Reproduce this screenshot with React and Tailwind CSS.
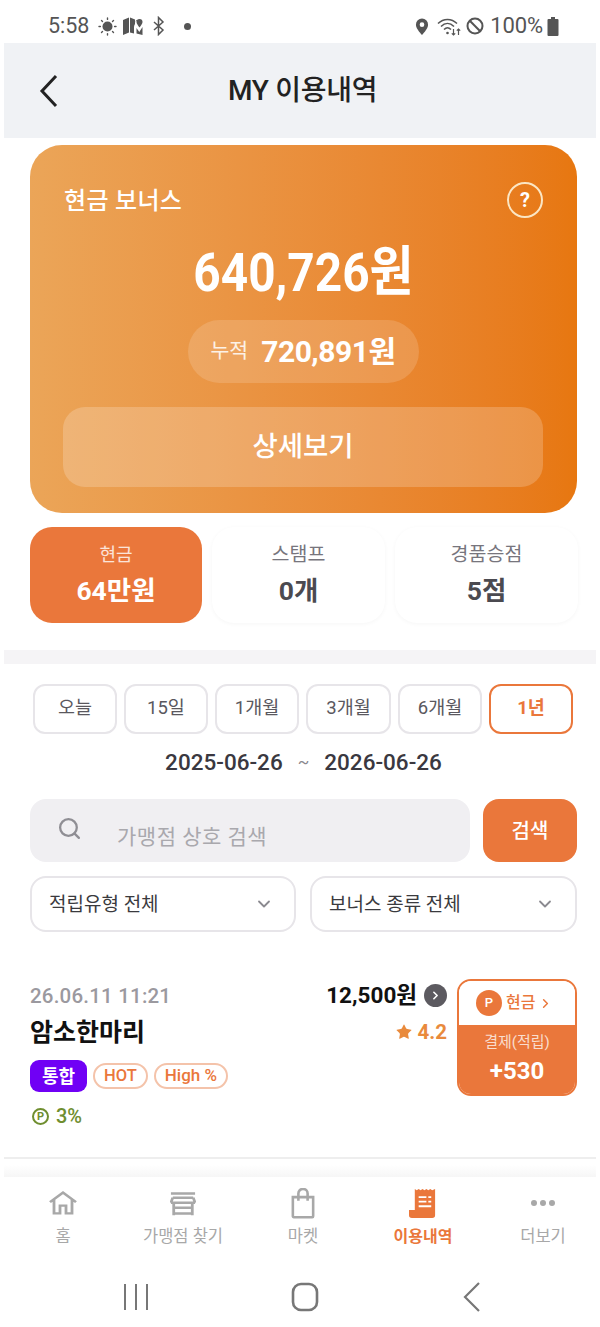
import React from "react";
import { ChevronDown, ChevronRight, Search, Star } from "lucide-react";

const FONT = { fontFamily: 'Roboto, "Noto Sans CJK KR", sans-serif' };

function StatusBar() {
  return (
    <div className="h-[43px] shrink-0 flex items-center justify-between pl-[48px] pr-[41px] pt-[9px] text-[#555]">
      <div className="flex items-center">
        <span className="text-[21.5px] leading-none">5:58</span>
        <svg className="ml-[9px]" width="19" height="19" viewBox="0 0 19 19" fill="#555">
          <circle cx="9.5" cy="9.5" r="5" />
          <g stroke="#555" strokeWidth="1.4" strokeLinecap="round">
            <path d="M9.5 1v1.4M9.5 16.6V18M1 9.5h1.4M16.6 9.5H18M3.5 3.5l1 1M14.5 14.5l1 1M3.5 15.5l1-1M14.5 4.5l1-1" />
          </g>
        </svg>
        <svg className="ml-[5px]" width="22" height="20" viewBox="0 0 22 20" fill="#555">
          <path d="M1 4l6-2.5v15L1 19zM8 1.5l5 2V8c-.6 1-1 2-1 3v6.5l-4-1zM14 4l1 .3c-1 1-1.5 2-1.5 3zM20.5 11v8l-6-1.5V12l2.8 4z" />
          <path d="M17.5 3a3 3 0 0 1 3 3c0 2-3 5.5-3 5.5s-3-3.500-3-5.500a3 3 0 0 1 3-3z" />
        </svg>
        <svg className="ml-[8px]" width="14" height="20" viewBox="0 0 14 20" fill="none" stroke="#555" strokeWidth="1.5">
          <path d="M2 6l9 8-4.500 4.500v-17L11 6l-9 8" />
        </svg>
        <span className="ml-[18px] w-[7px] h-[7px] rounded-full bg-[#555]" />
      </div>
      <div className="flex items-center">
        <svg width="14" height="19" viewBox="0 0 15 19">
          <path fillRule="evenodd" fill="#555" d="M7.500 1A6.500 6.500 0 0 1 14 7.500C14 12 7.500 18.500 7.500 18.500S1 12 1 7.500A6.500 6.500 0 0 1 7.500 1zm0 4a2.500 2.500 0 1 0 0 5 2.500 2.500 0 0 0 0-5z" />
        </svg>
        <svg className="ml-[8px]" width="25" height="21" viewBox="0 0 25 21" fill="none" stroke="#555" strokeWidth="1.500">
          <path d="M1 7.500c5.500-5.500 13.500-5.500 19 0M4 10.500c4-4 9-4 13 0M7 13.500c2.500-2.500 4.500-2.500 7 0" />
          <circle cx="10.500" cy="17" r="1.300" fill="#555" stroke="none" />
          <path d="M16.500 13v6M14.800 17.300l1.700 1.700 1.700-1.700M21.500 19v-6M19.800 14.700l1.700-1.700 1.700 1.700" strokeWidth="1.200" />
        </svg>
        <svg className="ml-[4px]" width="18" height="18" viewBox="0 0 18 18" fill="none" stroke="#555" strokeWidth="2">
          <circle cx="9" cy="9" r="7.500" />
          <path d="M3.800 3.800l10.400 10.400" />
        </svg>
        <span className="ml-[6px] text-[22px] leading-none tracking-[-0.1px]">100%</span>
        <svg className="ml-[4px]" width="12" height="19" viewBox="0 0 12 19" fill="#555">
          <path d="M4 0h4v2h2.500a1 1 0 0 1 1 1v15a1 1 0 0 1-1 1h-9a1 1 0 0 1-1-1V3a1 1 0 0 1 1-1H4z" />
        </svg>
      </div>
    </div>
  );
}

function Header() {
  return (
    <header className="mx-[4px] h-[95px] shrink-0 bg-[#f0f2f5] flex items-center pl-[31px]">
      <svg width="25" height="36" viewBox="0 0 25 36" fill="none" stroke="#222" strokeWidth="3">
        <path d="M21 3L7 18l14 15" />
      </svg>
      <h1 className="ml-[168px] text-[28px] leading-none font-medium text-[#222] tracking-[-0.3px]">MY 이용내역</h1>
    </header>
  );
}

function BonusCard() {
  return (
    <section className="mt-[7px] h-[368px] rounded-[32px] bg-gradient-to-r from-[#eba558] to-[#e77710] pl-[33px] pr-[34px] pt-[38px] text-white">
      <div className="flex items-center justify-between pl-[1px]">
        <span className="text-[24px] leading-none font-medium tracking-[0.3px]">현금 보너스</span>
        <span className="w-[36px] h-[36px] mt-[-1px] rounded-full border-2 border-[#fbe6c4] flex items-center justify-center text-[20px] font-bold leading-none">?</span>
      </div>
      <div className="mt-[25px] text-center text-[54px] leading-[60px] font-bold">
        <span className="inline-block scale-x-[0.885]">640,726원</span>
      </div>
      <div className="mt-[17px] flex justify-center">
        <div className="h-[63px] w-[231px] rounded-full bg-white/15 flex items-center justify-center">
          <span className="text-[20.5px] text-white/85 leading-none">누적</span>
          <span className="ml-[13px] text-[30px] font-bold leading-none tracking-[-0.5px]">720,891원</span>
        </div>
      </div>
      <button className="mt-[24px] w-full h-[80px] rounded-[22px] bg-white/20 text-[27.5px] font-medium leading-none">상세보기</button>
    </section>
  );
}

function Tabs() {
  const Cell = ({ label, value, active }) => (
    <div className={active
      ? "h-[96px] rounded-[22px] bg-[#ea773b] flex flex-col items-center pt-[17px] text-white"
      : "h-[96px] rounded-[22px] bg-white shadow-[0_1px_4px_rgba(0,0,0,0.04)] flex flex-col items-center pt-[17px]"}>
      <span className={active ? "text-[18px] leading-[22px] text-white/80" : "text-[19.5px] leading-[22px] text-[#77757d]"}>{label}</span>
      <span className={active ? "mt-[10px] text-[26.5px] leading-[30px] font-bold" : "mt-[10px] text-[26.5px] leading-[30px] font-bold text-[#4b4a50]"}>{value}</span>
    </div>
  );
  return (
    <div className="mt-[14px] grid grid-cols-[172px_173px_183px] gap-x-[10px]">
      <Cell label="현금" value="64만원" active />
      <Cell label="스탬프" value="0개" />
      <Cell label="경품승점" value="5점" />
    </div>
  );
}

function Periods() {
  const items = ["오늘", "15일", "1개월", "3개월", "6개월", "1년"];
  return (
    <div className="ml-[3px] grid grid-cols-[84px_84px_84px_85px_84px_84px] gap-x-[7px]">
      {items.map((t, i) => (
        <div key={t} className={i === 5
          ? "h-[50px] rounded-[12px] border-2 border-[#ea773b] flex items-center justify-center text-[18.5px] font-bold text-[#ea773b]"
          : "h-[50px] rounded-[12px] border-2 border-[#e7e5e9] flex items-center justify-center text-[18.5px] text-[#5a585e]"}>{t}</div>
      ))}
    </div>
  );
}

function SelectBox({ label }) {
  return (
    <div className="h-[56px] rounded-[16px] border-2 border-[#e7e5e9] flex items-center justify-between pl-[17px] pr-[20px]">
      <span className="text-[19px] leading-none text-[#3a3a3e]">{label}</span>
      <ChevronDown size={20} color="#8b8a90" strokeWidth={2.2} />
    </div>
  );
}

function Item() {
  return (
    <div className="mx-[4px] mt-[47px] pl-[26px] h-[180px] border-b-2 border-[#eeeeee] flex items-start">
      <div className="w-[270px] pt-[6px]">
        <div className="text-[20.5px] leading-[22px] font-medium text-[#9b999f] tracking-[0.2px]">26.06.11 11:21</div>
        <div className="mt-[11px] text-[25px] leading-[30px] font-bold text-[#111]">암소한마리</div>
        <div className="mt-[12px] flex items-center gap-x-[6px]">
          <span className="h-[32px] w-[57px] rounded-[9px] bg-[#7000f5] text-white text-[18px] font-bold flex items-center justify-center">통합</span>
          <span className="h-[26px] px-[9px] rounded-full border-2 border-[#f4c3aa] text-[#ea773b] text-[16.5px] font-medium flex items-center">HOT</span>
          <span className="h-[26px] px-[9px] rounded-full border-2 border-[#f4c3aa] text-[#ea773b] text-[17px] font-medium flex items-center">High %</span>
        </div>
        <div className="mt-[13px] ml-[2px] flex items-center text-[#6f8e2f]">
          <span className="w-[17px] h-[17px] rounded-full border-2 border-[#6f8e2f] flex items-center justify-center text-[11px] font-bold leading-none">P</span>
          <span className="ml-[7px] text-[20px] leading-[22px] font-medium">3%</span>
        </div>
      </div>
      <div className="w-[147px] flex flex-col items-end pt-[4px]">
        <div className="flex items-center">
          <span className="text-[22.5px] leading-[24px] font-bold text-[#111]">12,500원</span>
          <span className="ml-[7px] w-[23px] h-[23px] rounded-full bg-[#5c5a60] flex items-center justify-center">
            <ChevronRight size={13} color="#fff" strokeWidth={3} />
          </span>
        </div>
        <div className="mt-[14px] flex items-center text-[#e98a3c]">
          <Star size={18} fill="#e98a3c" strokeWidth={0} />
          <span className="ml-[5px] text-[20.5px] leading-[22px] font-bold">4.2</span>
        </div>
      </div>
      <div className="ml-[10px] w-[120px] h-[117px] shrink-0 rounded-[14px] border-2 border-[#ea773b] overflow-hidden flex flex-col">
        <div className="h-[44px] bg-white flex items-center pl-[17px]">
          <span className="w-[26px] h-[26px] rounded-full bg-[#ea773b] text-white text-[13px] font-medium flex items-center justify-center">P</span>
          <span className="ml-[4px] text-[16px] font-medium text-[#ea773b]">현금</span>
          <ChevronRight className="ml-[3px]" size={15} color="#ea773b" strokeWidth={2.4} />
        </div>
        <div className="flex-1 bg-[#ea773b] flex flex-col items-center text-white pt-[7px]">
          <span className="text-[15px] leading-[20px] text-white/75">결제(적립)</span>
          <span className="mt-[5px] text-[24px] leading-[28px] font-bold">+530</span>
        </div>
      </div>
    </div>
  );
}

function BottomNav() {
  const gray = "#a8a8a8";
  const orange = "#ea773b";
  const Tab = ({ icon, label, active }) => (
    <div className="w-[120px] shrink-0 flex flex-col items-center">
      <div className="h-[36px] flex items-center justify-center">{icon}</div>
      <span className={active ? "mt-[6px] text-[16px] leading-[20px] font-bold text-[#ea773b] whitespace-nowrap" : "mt-[6px] text-[16.5px] leading-[20px] text-[#a8a8a8] whitespace-nowrap"}>{label}</span>
    </div>
  );
  return (
    <nav className="pl-[3px] h-[82px] shrink-0 pt-[8px] flex bg-white">
      <Tab label="홈" icon={
        <svg width="30" height="26" viewBox="0 0 30 30" preserveAspectRatio="none" fill="none" stroke={gray} strokeWidth="2.800">
          <path d="M2 14L15 3l13 11M6 11v16h6v-9h6v9h6V11" />
        </svg>} />
      <Tab label="가맹점 찾기" icon={
        <svg width="26" height="25" viewBox="0 0 28 30" preserveAspectRatio="none" fill="none" stroke={gray} strokeWidth="3">
          <path d="M1 3h26M3 8h22M3 8l-2 6M25 8l2 6M1 14h26M4 14v15M24 14v15M4 20h20M4 27h20" />
        </svg>} />
      <Tab label="마켓" icon={
        <svg width="24" height="31" viewBox="0 0 26 34" preserveAspectRatio="none" fill="none" stroke={gray} strokeWidth="2.800">
          <path d="M2 10h22v21a1 1 0 0 1-1 1H3a1 1 0 0 1-1-1zM8 14V6a5 5 0 0 1 10 0v8" />
        </svg>} />
      <Tab label="이용내역" active icon={
        <svg width="29" height="31" viewBox="0 0 30 34" preserveAspectRatio="none" fill={orange}>
          <path fillRule="evenodd" d="M6 1l2 1.500L10 1l2 1.500L14 1l2 1.500L18 1l2 1.500L22 1l2 1.500L27 1v29a3 3 0 0 1-3 3H3a3 3 0 0 1-3-3v-6h6zM10 9v2h8V9zm10 0v2h3V9zM10 14v2h8v-2zm10 0v2h3v-2zM10 19v2h13v-2z" />
        </svg>} />
      <Tab label="더보기" icon={
        <div className="flex gap-x-[3px]">
          <span className="w-[6px] h-[6px] rounded-full bg-[#a8a8a8]" />
          <span className="w-[6px] h-[6px] rounded-full bg-[#a8a8a8]" />
          <span className="w-[6px] h-[6px] rounded-full bg-[#a8a8a8]" />
        </div>} />
    </nav>
  );
}

function SystemNav() {
  return (
    <div className="h-[68px] shrink-0 flex items-start pt-[22px] pl-[123px]">
      <svg width="26" height="32" viewBox="0 0 26 32" fill="none" stroke="#777" strokeWidth="2"><path d="M2 3v26M13 3v26M24 3v26" /></svg>
      <svg className="ml-[142px]" width="28" height="32" viewBox="0 0 28 32" fill="none" stroke="#777" strokeWidth="2.600"><rect x="2" y="3" width="24" height="26" rx="8" /></svg>
      <svg className="ml-[143px]" width="20" height="32" viewBox="0 0 20 32" fill="none" stroke="#777" strokeWidth="2.200"><path d="M17 2L3 16l14 14" /></svg>
    </div>
  );
}

export default function App() {
  return (
    <div style={FONT} className="w-[600px] h-[1327px] overflow-hidden bg-white flex flex-col">
      <StatusBar />
      <Header />
      <main className="flex-1 min-h-0 flex flex-col">
        <div className="pl-[30px] pr-[23px]">
          <BonusCard />
          <Tabs />
        </div>
        <div className="mx-[4px] mt-[27px] h-[14px] shrink-0 bg-[#f5f4f6]" />
        <div className="pl-[30px] pr-[23px] pt-[20px]">
          <Periods />
          <div className="mt-[16px] h-[26px] flex items-center justify-center text-[22.5px] font-medium text-[#3a3840]">
            <span>2025-06-26</span>
            <span className="mx-[15px] text-[17px] font-normal text-[#8a888e]">~</span>
            <span>2026-06-26</span>
          </div>
          <div className="mt-[23px] flex gap-x-[13px]">
            <div className="w-[440px] h-[63px] rounded-[16px] bg-[#f0eff2] flex items-center pl-[27px]">
              <Search size={25} color="#8f8e94" strokeWidth={2.200} className="mt-[-4px]" />
              <span className="ml-[35px] mt-[14px] text-[21px] leading-none text-[#a9a8ad] tracking-[0.5px]">가맹점 상호 검색</span>
            </div>
            <button className="w-[94px] h-[63px] rounded-[16px] bg-[#ea773b] text-white text-[20px] font-medium">검색</button>
          </div>
          <div className="mt-[14px] grid grid-cols-[266px_267px] gap-x-[14px]">
            <SelectBox label="적립유형 전체" />
            <SelectBox label="보너스 종류 전체" />
          </div>
        </div>
        <Item />
        <div className="mx-[4px] mt-auto h-[12px] shrink-0 bg-gradient-to-b from-white to-[#f6f6f6]" />
      </main>
      <BottomNav />
      <SystemNav />
    </div>
  );
}
